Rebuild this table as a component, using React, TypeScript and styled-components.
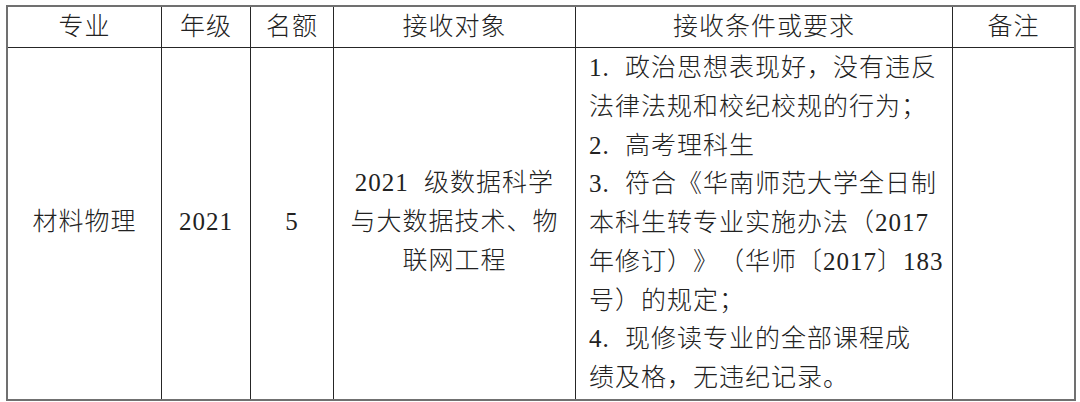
import React from "react";
import styled, { createGlobalStyle } from "styled-components";

const Global = createGlobalStyle`
  html, body { margin: 0; padding: 0; background: #ffffff; }
  body {
    font-family: "Liberation Serif", "Noto Sans CJK SC", serif;
    color: #222222;
  }
`;

const Sheet = styled.div`
  padding: 5px 0 0 6px;
`;

const Table = styled.div`
  display: grid;
  grid-template-columns: 154px 89px 83px 242px 377px 121px;
  grid-template-rows: 41px 351px;
  width: max-content;
  border: 2px solid #707070;
  font-size: 25px;
  letter-spacing: 1px;
  word-spacing: 8px;
  font-weight: 300;
  text-spacing-trim: space-all;
  font-kerning: none;
`;

const Cell = styled.div<{ $last?: boolean }>`
  box-sizing: border-box;
  border-right: ${(p) => (p.$last ? "none" : "1px solid #262626")};
  display: flex;
  align-items: center;
  justify-content: center;
  text-align: center;
  white-space: nowrap;
  line-height: 38.75px;
`;

const HeadCell = styled(Cell)`
  border-bottom: 1px solid #262626;
  padding-top: 1px;
`;

const BodyCell = styled(Cell)<{ $list?: boolean }>`
  flex-direction: column;
  align-items: ${(p) => (p.$list ? "flex-start" : "center")};
  justify-content: ${(p) => (p.$list ? "flex-start" : "center")};
  text-align: ${(p) => (p.$list ? "left" : "center")};
  padding: ${(p) => (p.$list ? "1px 0 0 13px" : "0 0 2px 0")};
`;

const Line = styled.span`
  display: block;
`;

const heads = ["专业", "年级", "名额", "接收对象", "接收条件或要求", "备注"];

const target = ["2021 级数据科学", "与大数据技术、物", "联网工程"];

const conditions = [
  "1. 政治思想表现好，没有违反",
  "法律法规和校纪校规的行为；",
  "2. 高考理科生",
  "3. 符合《华南师范大学全日制",
  "本科生转专业实施办法（2017",
  "年修订）》（华师〔2017〕183",
  "号）的规定；",
  "4. 现修读专业的全部课程成",
  "绩及格，无违纪记录。",
];

export default function App() {
  return (
    <>
      <Global />
      <Sheet>
        <Table>
          {heads.map((h, i) => (
            <HeadCell key={h} $last={i === heads.length - 1}>
              {h}
            </HeadCell>
          ))}
          <BodyCell>材料物理</BodyCell>
          <BodyCell>2021</BodyCell>
          <BodyCell>5</BodyCell>
          <BodyCell>
            {target.map((t) => (
              <Line key={t}>{t}</Line>
            ))}
          </BodyCell>
          <BodyCell $list>
            {conditions.map((c) => (
              <Line key={c}>{c}</Line>
            ))}
          </BodyCell>
          <BodyCell $last />
        </Table>
      </Sheet>
    </>
  );
}
